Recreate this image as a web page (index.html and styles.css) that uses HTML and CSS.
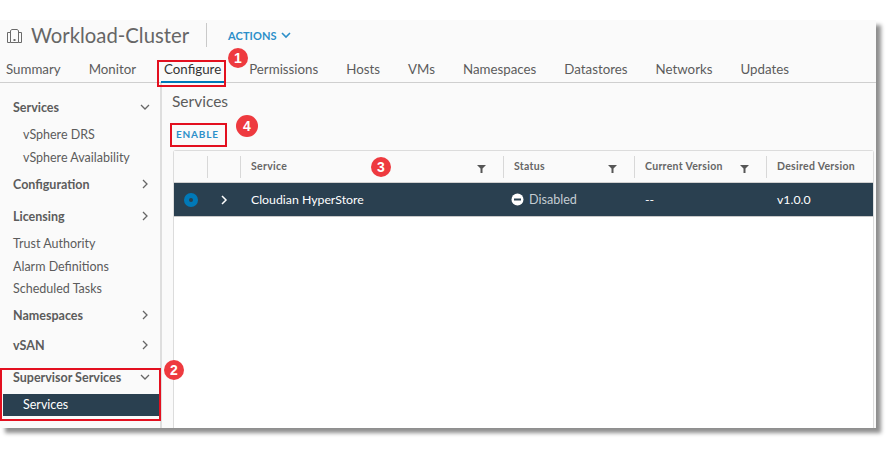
FILE: index.html
```html
<!DOCTYPE html>
<html lang="en">
<head>
    <meta charset="UTF-8">
    <title>Workload-Cluster Services</title>
    <link rel="stylesheet" href="styles.css">
</head>
<body>
    <div class="panel">
        <div class="title-bar">
            <svg class="cluster-icon" width="17" height="16" viewBox="0 0 17 16" fill="none" stroke="#6a6a6a" stroke-width="1">
                <path d="M4.500 4.500h-3v10h3"/>
                <path d="M12.500 4.500h3v10h-3"/>
                <path d="M4.500 14.500v-12l1.500-1h5l1.500 1v12z"/>
                <rect x="7.500" y="11" width="2" height="2" fill="#6a6a6a" stroke="none"/>
            </svg>
            <h1 class="title">Workload-Cluster</h1>
            <a class="actions">ACTIONS
                <svg width="10" height="7" viewBox="0 0 10 7" fill="none" stroke="#2c8fc9" stroke-width="1.600"><path d="M1 1l4 4 4-4"/></svg>
            </a>
        </div>

        <div class="tabs">
            <a class="tab">Summary</a>
            <a class="tab">Monitor</a>
            <a class="tab active">Configure</a>
            <a class="tab">Permissions</a>
            <a class="tab">Hosts</a>
            <a class="tab">VMs</a>
            <a class="tab">Namespaces</a>
            <a class="tab">Datastores</a>
            <a class="tab">Networks</a>
            <a class="tab">Updates</a>
        </div>

        <div class="body">
            <div class="sidebar">
                <div class="nav-head nav-first">Services <svg class="chev" width="10" height="10" viewBox="0 0 10 10"><path d="M1 3l4 4 4-4"/></svg></div>
                <div class="nav-item">vSphere DRS</div>
                <div class="nav-item">vSphere Availability</div>
                <div class="nav-head">Configuration <svg class="chev" width="10" height="10" viewBox="0 0 10 10"><path d="M3 1l4 4-4 4"/></svg></div>
                <div class="nav-head nav-gap">Licensing <svg class="chev" width="10" height="10" viewBox="0 0 10 10"><path d="M3 1l4 4-4 4"/></svg></div>
                <div class="nav-link">Trust Authority</div>
                <div class="nav-link">Alarm Definitions</div>
                <div class="nav-link nav-last">Scheduled Tasks</div>
                <div class="nav-head">Namespaces <svg class="chev" width="10" height="10" viewBox="0 0 10 10"><path d="M3 1l4 4-4 4"/></svg></div>
                <div class="nav-head nav-gap2">vSAN <svg class="chev" width="10" height="10" viewBox="0 0 10 10"><path d="M3 1l4 4-4 4"/></svg></div>
                <div class="nav-head nav-gap">Supervisor Services <svg class="chev" width="10" height="10" viewBox="0 0 10 10"><path d="M1 3l4 4 4-4"/></svg></div>
                <div class="nav-item selected">Services</div>
            </div>

            <div class="main">
                <h2 class="heading">Services</h2>
                <a class="enable">ENABLE</a>
                <div class="table">
                    <div class="row head">
                        <div class="cell"></div>
                        <div class="cell sep"></div>
                        <div class="cell sep label">Service <svg class="filter" width="9" height="9" viewBox="0 0 9 9"><path d="M0 1h9L5.500 4.500V9h-2V4.500z"/></svg></div>
                        <div class="cell sep label">Status <svg class="filter" width="9" height="9" viewBox="0 0 9 9"><path d="M0 1h9L5.500 4.500V9h-2V4.500z"/></svg></div>
                        <div class="cell sep label">Current Version <svg class="filter" width="9" height="9" viewBox="0 0 9 9"><path d="M0 1h9L5.500 4.500V9h-2V4.500z"/></svg></div>
                        <div class="cell sep label">Desired Version</div>
                    </div>
                    <div class="row data">
                        <div class="cell center"><span class="radio"></span></div>
                        <div class="cell center">
                            <svg width="10" height="12" viewBox="0 0 10 12" fill="none" stroke="#fff" stroke-width="1.500"><path d="M3 2l4 4-4 4"/></svg>
                        </div>
                        <div class="cell name">Cloudian HyperStore</div>
                        <div class="cell status">
                            <svg width="13" height="13" viewBox="0 0 13 13"><circle cx="6.500" cy="6.500" r="6" fill="#fff"/><rect x="3" y="5.500" width="7" height="2" fill="#2a4050"/></svg>
                            Disabled
                        </div>
                        <div class="cell value">--</div>
                        <div class="cell value">v1.0.0</div>
                    </div>
                </div>
            </div>
        </div>
    </div>

    <!-- annotations drawn over the screenshot -->
    <div class="mark mark-configure"></div>
    <div class="mark mark-enable"></div>
    <div class="mark mark-supervisor"></div>
    <div class="badge badge-1">1</div>
    <div class="badge badge-2">2</div>
    <div class="badge badge-3">3</div>
    <div class="badge badge-4">4</div>
</body>
</html>
```
FILE: styles.css
```css
body {
    margin: 0;
    background: #fff;
    font-family: Lato, "Open Sans", sans-serif;
    color: #5c5c5c;
    position: relative;
    height: 451px;
    overflow: hidden;
}
.panel {
    position: absolute;
    top: 20px;
    left: 0;
    width: 876px;
    height: 408px;
    background: #fafafa;
    box-shadow: 5px 5px 4px #8f8f8f;
    display: flex;
    flex-direction: column;
}
.title-bar {
    display: flex;
    align-items: center;
    height: 31px;
    padding-left: 6px;
}
.cluster-icon {
    margin-right: 8px;
}
.title {
    margin: -2px 0 0;
    font-size: 20.3px;
    font-weight: 400;
    color: #666;
    width: 175px;
    border-right: 1px solid #c9c9c9;
    line-height: 24px;
}
.actions {
    margin-left: 21px;
    font-size: 11px;
    letter-spacing: 0.1px;
    color: #2c8fc9;
    font-weight: 700;
}
.actions svg {
    margin-left: 2px;
    vertical-align: 1px;
}
.tabs {
    display: flex;
    height: 31px;
    border-bottom: 1px solid #cfcfcf;
    padding-left: 6px;
    gap: 28px;
}
.tab {
    font-size: 13.3px;
    line-height: 37px;
    height: 32px;
    box-sizing: border-box;
}
.tab.active {
    color: #333;
    border-bottom: 2.500px solid #0079b8;
    padding: 0 3px;
    margin: 0 -3px;
}
.body {
    flex: 1;
    display: flex;
    min-height: 0;
}
.sidebar {
    width: 160px;
    border-right: 2px solid #dedede;
    box-sizing: content-box;
    font-size: 12.5px;
}
.nav-head {
    display: flex;
    justify-content: space-between;
    align-items: center;
    font-weight: 700;
    height: 16px;
    margin-top: 8px;
    padding: 0 10px 0 13px;
}
.nav-first {
    margin-top: 16px;
}
.nav-gap {
    margin-top: 16px;
}
.nav-gap2 {
    margin-top: 14px;
}
.nav-item {
    height: 22px;
    line-height: 22px;
    padding-left: 23px;
    margin-top: 1px;
}
.nav-first + .nav-item {
    margin-top: 9px;
}
.nav-item + .nav-head {
    margin-top: 7px;
}
.nav-link {
    height: 22px;
    line-height: 22px;
    padding-left: 13px;
    margin-top: 1px;
}
.nav-gap + .nav-link {
    margin-top: 9px;
}
.nav-link.nav-last {
    margin-top: 0;
    margin-bottom: -1px;
}
.chev {
    fill: none;
    stroke: #666;
    stroke-width: 1.300;
}
.nav-item.selected {
    background: #2a4050;
    color: #fff;
    margin: 9px 0 0 3px;
    padding-left: 20px;
}
.main {
    flex: 1;
    min-width: 0;
    padding-left: 11px;
    display: flex;
    flex-direction: column;
}
.heading {
    margin: 9px 0 0 -1px;
    font-size: 15.5px;
    font-weight: 400;
    line-height: 18px;
}
.enable {
    margin: 17px 0 0 3px;
    font-size: 10px;
    font-weight: 700;
    letter-spacing: 0.8px;
    color: #2c8fc9;
    line-height: 14px;
}
.table {
    flex: 1;
    margin-top: 9px;
    width: 699px;
    background: #fff;
    border: 1px solid #dcdcdc;
    border-bottom: none;
    border-radius: 3px 3px 0 0;
}
.row {
    display: grid;
    grid-template-columns: 33px 33px 263px 131px 132px 1fr;
}
.row.head {
    height: 31px;
    align-items: center;
    background: #fafafa;
    border-bottom: 1px solid #d0d0d0;
    font-size: 10.5px;
    color: #666;
}
.row.head .cell {
    height: 22px;
}
.cell.sep {
    border-left: 1px solid #d8d8d8;
}
.cell.label {
    display: flex;
    align-items: center;
    justify-content: space-between;
    box-sizing: border-box;
    padding: 0 17px 2px 10px;
    font-weight: 700;
    letter-spacing: 0.3px;
}
.filter {
    fill: #565656;
    margin-top: 6px;
}
.row.data {
    height: 33px;
    background: #2a4050;
    color: #fff;
    align-items: center;
    font-size: 12.3px;
    border-bottom: 1px solid #c8c8c8;
}
.cell.center {
    display: flex;
    justify-content: center;
}
.radio {
    width: 14px;
    height: 14px;
    border-radius: 50%;
    background: #0079b8;
    display: flex;
    align-items: center;
    justify-content: center;
}
.radio::after {
    content: "";
    width: 4px;
    height: 4px;
    border-radius: 50%;
    background: #2a4050;
}
.cell.name,
.cell.value {
    padding-left: 11px;
}
.cell.status {
    display: flex;
    align-items: center;
    gap: 5px;
    padding-left: 8px;
    color: #c4ccd2;
    font-size: 12.600px;
}
.mark {
    position: absolute;
    border: 2px solid #e3101f;
    box-sizing: border-box;
}
.mark-configure {
    left: 157px;
    top: 60px;
    width: 69px;
    height: 27px;
}
.mark-enable {
    left: 170px;
    top: 123px;
    width: 57px;
    height: 24px;
}
.mark-supervisor {
    left: 0;
    top: 368px;
    width: 161px;
    height: 53px;
}
.badge {
    position: absolute;
    width: 20px;
    height: 20px;
    border-radius: 50%;
    background: #ee3a3f;
    color: #fff;
    font: 700 14px/20px "Liberation Sans", sans-serif;
    text-align: center;
}
.badge-1 {
    left: 228px;
    top: 48px;
}
.badge-2 {
    left: 164px;
    top: 360px;
}
.badge-3 {
    left: 371px;
    top: 157px;
}
.badge-4 {
    left: 236px;
    top: 115px;
    width: 22px;
    height: 22px;
    line-height: 22px;
}
```
